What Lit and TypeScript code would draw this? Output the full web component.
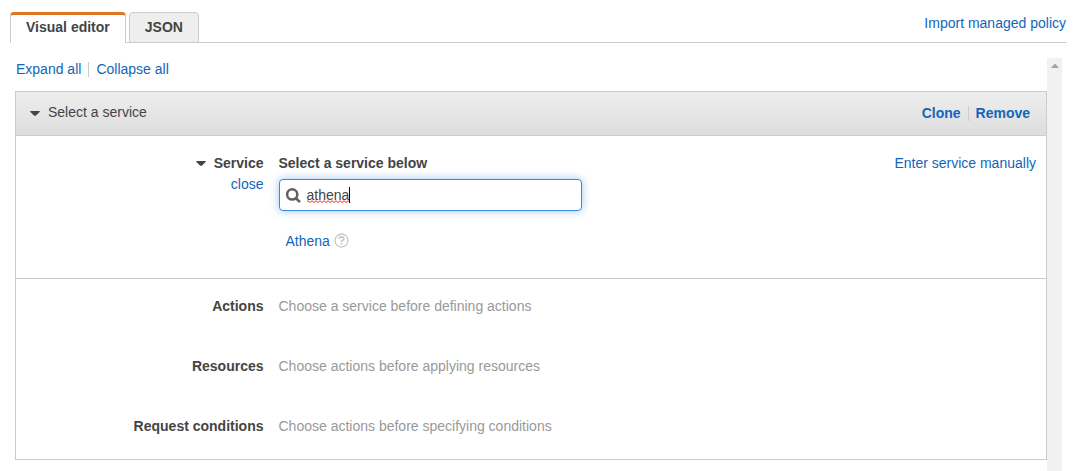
import { LitElement, html, css } from "lit";
import { customElement, state } from "lit/decorators.js";

const caret = html`<svg class="caret" width="10" height="5" viewBox="0 0 10 5">
  <path d="M0.6 0H9.4Q10.2 0.2 9.6 0.9L6 4.6Q5 5.3 4 4.6L0.4 0.9Q-0.2 0.2 0.6 0Z" fill="#444" />
</svg>`;

@customElement("app-root")
export class AppRoot extends LitElement {
  @state() private query = "athena";

  private rows = [
    { label: "Actions", hint: "Choose a service before defining actions" },
    { label: "Resources", hint: "Choose actions before applying resources" },
    { label: "Request conditions", hint: "Choose actions before specifying conditions" },
  ];

  static styles = css`
    :host {
      display: flex;
      flex-direction: column;
      box-sizing: border-box;
      height: 471px;
      overflow: hidden;
      padding: 12px 12px 0 10px;
      background: #fff;
      color: #444;
      font: 14px/20px "Liberation Sans", Arial, sans-serif;
    }
    * { box-sizing: border-box; }
    svg { display: block; flex: none; }
    a { color: #1166bb; text-decoration: none; cursor: pointer; }
    .tabs { display: flex; height: 31px; flex: none; }
    .tab {
      height: 31px;
      border: 1px solid #ccc;
      border-radius: 4px 4px 0 0;
      padding: 4px 15px 0;
      font-weight: bold;
      background: #eee;
      white-space: nowrap;
    }
    .tab.active {
      border-top: 3px solid #e07620;
      border-bottom: 0;
      padding-top: 2px;
      background: #fff;
    }
    .gap { width: 3px; border-bottom: 1px solid #ccc; }
    .rest {
      flex: 1;
      display: flex;
      justify-content: flex-end;
      border-bottom: 1px solid #ccc;
      padding: 1px 1px 0 0;
    }
    .scroller { display: flex; flex: 1; margin: 15px 5px 0 5px; }
    .content { flex: 1; }
    .links { display: flex; align-items: center; height: 20px; margin: 1px 0 12px 1px; }
    .sep { width: 1px; height: 15px; margin: 0 7px; background: #ccc; }
    .card { border: 1px solid #ccc; height: 369px; }
    .head {
      display: flex;
      height: 44px;
      padding: 10px 16px 0 14px;
      border-bottom: 1px solid #ccc;
      background: linear-gradient(#eee, #ddd);
    }
    .head .caret { margin: 9px 8px 0 0; }
    .head .title { flex: 1; }
    .head .acts { display: flex; align-items: center; height: 20px; margin-top: 1px; font-weight: bold; }
    .service { display: flex; height: 143px; padding: 17px 10px 0 0; border-bottom: 1px solid #ccc; }
    .label { width: 247.5px; margin-right: 15px; flex: none; text-align: right; font-weight: bold; }
    .label a { display: block; margin-top: 1px; font-weight: normal; }
    .name { display: flex; justify-content: flex-end; }
    .name .caret { margin: 8px 8px 0 0; }
    .body { flex: 1; }
    .prompt { font-weight: bold; }
    .search {
      display: flex;
      width: 303px;
      height: 32px;
      margin-top: 6px;
      padding: 5px 6px;
      border: 1px solid #3c8bdb;
      border-radius: 4px;
      background: #fff;
      box-shadow: 0 0 9px rgba(60, 139, 219, 0.5);
    }
    .search svg { margin: 3px 5px 0 0; }
    .typed {
      background: url("data:image/svg+xml,%3Csvg xmlns='http://www.w3.org/2000/svg' width='4' height='3'%3E%3Cpath d='M-1 2.5L1 0.7L3 2.5L5 0.7' fill='none' stroke='%23f22' stroke-width='1'/%3E%3C/svg%3E") 0 15px repeat-x;
    }
    .cursor { width: 1px; height: 16px; margin-top: 2px; background: #000; }
    .result { display: flex; margin: 20px 0 0 7px; }
    .result svg { margin: 2px 0 0 4.5px; }
    .row { display: flex; height: 60px; padding-top: 17px; }
    .hint { color: #999; }
    .track { width: 15px; background: #f1f1f1; padding: 6px 0 0 4px; }
  `;

  render() {
    return html`
      <div class="tabs">
        <div class="tab active">Visual editor</div>
        <div class="gap"></div>
        <div class="tab">JSON</div>
        <div class="rest"><a>Import managed policy</a></div>
      </div>
      <div class="scroller">
        <div class="content">
          <div class="links"><a>Expand all</a><span class="sep"></span><a>Collapse all</a></div>
          <div class="card">
            <div class="head">
              ${caret}
              <span class="title">Select a service</span>
              <div class="acts"><a>Clone</a><span class="sep"></span><a>Remove</a></div>
            </div>
            <div class="service">
              <div class="label">
                <div class="name">${caret}<span>Service</span></div>
                <a>close</a>
              </div>
              <div class="body">
                <div class="prompt">Select a service below</div>
                <div class="search">
                  <svg width="16" height="15" viewBox="0 0 16 15" fill="none" stroke="#606060">
                    <circle cx="6.2" cy="6.4" r="5.1" stroke-width="2.5" />
                    <path d="M9.9 10.1L13.2 13.4" stroke-width="2.7" stroke-linecap="round" />
                  </svg>
                  <span class="typed">${this.query}</span><span class="cursor"></span>
                </div>
                <div class="result">
                  <a>Athena</a>
                  <svg width="15" height="15" viewBox="0 0 15 15" fill="none" stroke="#c8c8c8">
                    <circle cx="7.5" cy="7.5" r="6.5" stroke-width="1.3" />
                    <path d="M5.1 5.8Q5.3 3.8 7.5 3.8Q9.8 3.9 9.8 5.7Q9.8 6.7 8.6 7.3Q7.5 7.8 7.5 9" stroke-width="1.8" />
                    <path d="M7.5 9.9V11.6" stroke-width="1.9" />
                  </svg>
                </div>
              </div>
              <a>Enter service manually</a>
            </div>
            ${this.rows.map(
              (r) => html`<div class="row"><div class="label">${r.label}</div><div class="hint">${r.hint}</div></div>`
            )}
          </div>
        </div>
        <div class="track">
          <svg width="8" height="4" viewBox="0 0 8 4"><path d="M0 4L3.5 0H4.5L8 4Z" fill="#a3a3a3" /></svg>
        </div>
      </div>
    `;
  }
}
